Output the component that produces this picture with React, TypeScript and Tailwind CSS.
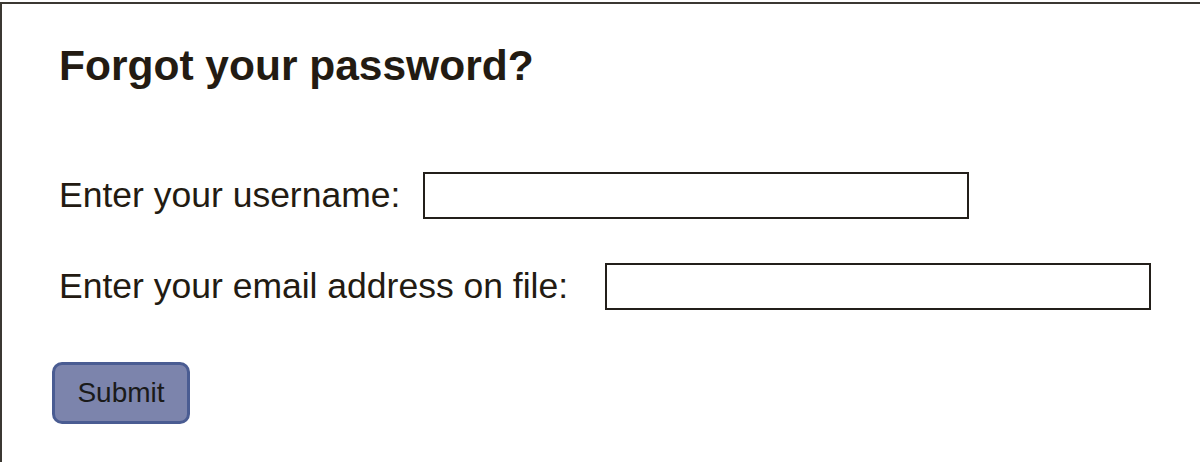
import React from "react";

export default function App() {
  return (
    <div className="w-[1200px] h-[462px] bg-white overflow-hidden" style={{ fontFamily: '"Liberation Sans", Arial, sans-serif' }}>
      <div className="mt-[2px] h-[460px] border-t-2 border-l-2 border-[#3b3832] pl-[50px] pt-[38px] text-[#231b12]">
        <h1 className="ml-[7px] text-[42.5px] leading-[48px] font-bold">Forgot your password?</h1>
        <div className="mt-[82px] flex items-center h-[46px]">
          <label className="ml-[7px] text-[35.5px] leading-[46px] whitespace-nowrap">Enter your username:</label>
          <input type="text" className="ml-[23px] w-[546px] h-[47px] border-2 border-[#231f1a] bg-white outline-none" />
        </div>
        <div className="mt-[45px] flex items-center h-[46px]">
          <label className="ml-[7px] text-[35.5px] leading-[46px] whitespace-nowrap">Enter your email address on file:</label>
          <input type="text" className="ml-[37px] w-[546px] h-[47px] border-2 border-[#231f1a] bg-white outline-none" />
        </div>
        <button className="mt-[53px] w-[138px] h-[62px] rounded-[10px] border-[3px] border-[#4a5c92] bg-[#7c84ac] text-[28px] leading-[28px] text-[#1a1a1a] flex items-center justify-center">
          Submit
        </button>
      </div>
    </div>
  );
}
